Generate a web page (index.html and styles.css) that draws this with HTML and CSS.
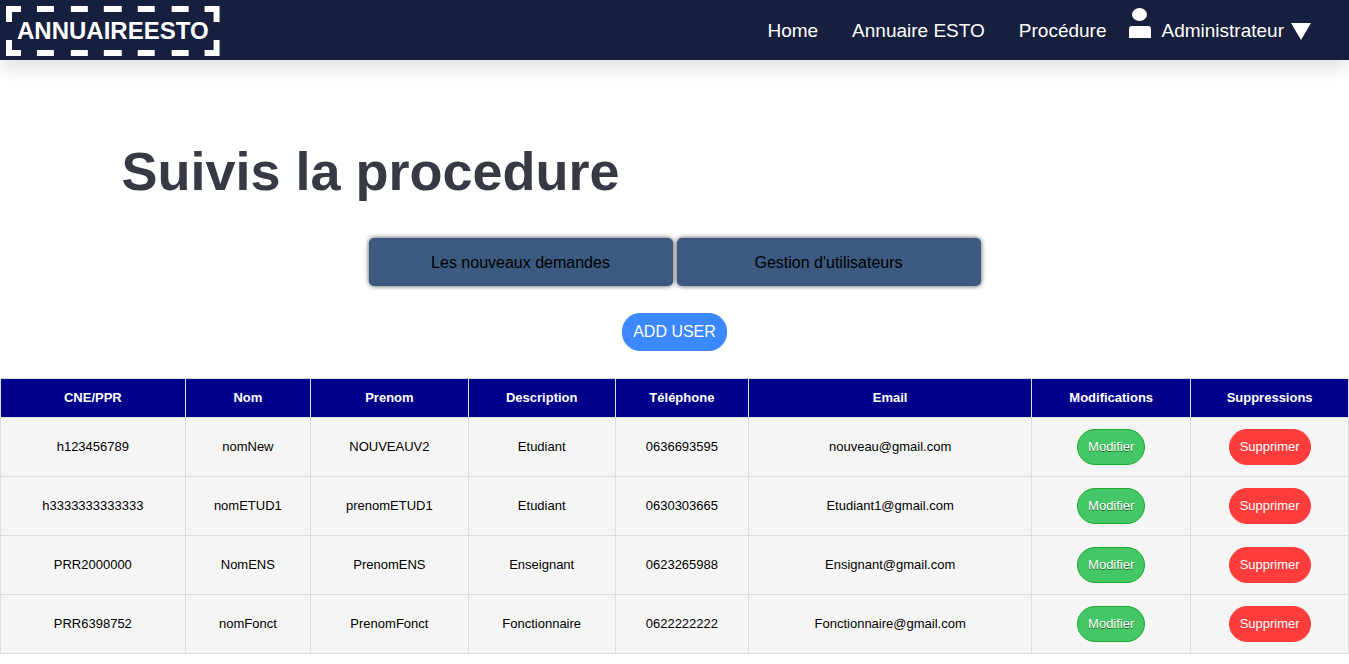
FILE: index.html
```html
<!DOCTYPE html>
<html lang="fr">
<head>
<meta charset="utf-8">
<meta name="viewport" content="width=device-width, initial-scale=1">
<title>Annuaire ESTO</title>
<link rel="stylesheet" href="styles.css">
</head>
<body>
<header class="topbar">
  <a class="logo" href="#">
    <svg class="logo-frame" viewBox="0 0 214 50" preserveAspectRatio="none" aria-hidden="true">
      <path d="M0 16V0H15V6H6V16ZM199 0H214V16H208V6H199ZM0 34V50H15V44H6V34ZM199 50H214V34H208V44H199Z"/>
      <path d="M31 0h17v6h-17zM65 0h17v6h-17zM98 0h18v6h-18zM132 0h17v6h-17zM166 0h17v6h-17z"/>
      <path d="M31 44h17v6h-17zM65 44h17v6h-17zM98 44h18v6h-18zM132 44h17v6h-17zM166 44h17v6h-17z"/>
    </svg>
    ANNUAIREESTO
  </a>
  <nav class="menu">
    <a class="menu-link" href="#">Home</a>
    <a class="menu-link" href="#">Annuaire ESTO</a>
    <a class="menu-link" href="#">Procédure</a>
    <a class="menu-user" href="#">
      <svg class="user-icon" viewBox="0 0 22 30" aria-hidden="true"><ellipse cx="10.500" cy="6.500" rx="7.500" ry="6.500"/><path d="M0 30V21Q0 18 3 18H19Q22 18 22 21V30Z"/></svg>
      Administrateur
      <svg class="caret" viewBox="0 0 20 17" aria-hidden="true"><path d="M0 0H20L10 17Z"/></svg>
    </a>
  </nav>
</header>
<main>
  <h1 class="title">Suivis la procedure</h1>
  <div class="tabs">
    <button class="tab" type="button">Les nouveaux demandes</button>
    <button class="tab" type="button">Gestion d'utilisateurs</button>
  </div>
  <div class="actions"><button class="pill add" type="button">ADD USER</button></div>
  <table class="users">
    <colgroup><col class="c-id"><col class="c-nom"><col class="c-prenom"><col class="c-desc"><col class="c-tel"><col class="c-mail"><col class="c-mod"><col class="c-sup"></colgroup>
    <thead>
      <tr><th>CNE/PPR</th><th>Nom</th><th>Prenom</th><th>Description</th><th>Téléphone</th><th>Email</th><th>Modifications</th><th>Suppressions</th></tr>
    </thead>
    <tbody>
      <tr><td>h123456789</td><td>nomNew</td><td>NOUVEAUV2</td><td>Etudiant</td><td>0636693595</td><td>nouveau@gmail.com</td><td><button class="pill edit" type="button">Modifier</button></td><td><button class="pill delete" type="button">Supprimer</button></td></tr>
      <tr><td>h3333333333333</td><td>nomETUD1</td><td>prenomETUD1</td><td>Etudiant</td><td>0630303665</td><td>Etudiant1@gmail.com</td><td><button class="pill edit" type="button">Modifier</button></td><td><button class="pill delete" type="button">Supprimer</button></td></tr>
      <tr><td>PRR2000000</td><td>NomENS</td><td>PrenomENS</td><td>Enseignant</td><td>0623265988</td><td>Ensignant@gmail.com</td><td><button class="pill edit" type="button">Modifier</button></td><td><button class="pill delete" type="button">Supprimer</button></td></tr>
      <tr><td>PRR6398752</td><td>nomFonct</td><td>PrenomFonct</td><td>Fonctionnaire</td><td>0622222222</td><td>Fonctionnaire@gmail.com</td><td><button class="pill edit" type="button">Modifier</button></td><td><button class="pill delete" type="button">Supprimer</button></td></tr>
    </tbody>
  </table>
</main>
</body>
</html>
```
FILE: styles.css
```css
* { box-sizing: border-box; }
body {
  margin: 0;
  background: #fff;
  color: #000;
  font-family: "Liberation Sans", Arial, sans-serif;
}
button { font-family: inherit; cursor: pointer; }

.topbar {
  display: flex;
  align-items: center;
  justify-content: space-between;
  padding: 6px 38px 4px 6px;
  background: #161f3d;
  box-shadow: 0 10px 15px rgba(0, 0, 0, 0.1);
}
.logo {
  position: relative;
  padding: 11px;
  color: #fff;
  font-size: 24px;
  font-weight: bold;
  line-height: 28px;
  text-decoration: none;
}
.logo-frame {
  position: absolute;
  inset: 0;
  width: 100%;
  height: 100%;
  fill: #fff;
}
.menu { display: flex; align-items: center; }
.menu-link, .menu-user {
  color: #fff;
  font-size: 19px;
  line-height: 22px;
  text-decoration: none;
}
.menu-link { margin-right: 34px; }
.menu-link:nth-child(3) { margin-right: 22px; }
.menu-user { display: flex; align-items: center; }
.user-icon {
  width: 22px;
  height: 30px;
  margin: 0 11px 16px 0;
  fill: #fff;
}
.caret {
  width: 20px;
  height: 17px;
  margin-left: 7px;
  fill: #fff;
}

.title {
  margin: 80px 9% 36px;
  color: #373943;
  font-size: 54px;
  line-height: 62px;
}
.tabs {
  display: flex;
  justify-content: center;
  gap: 4px;
}
.tab {
  width: 304px;
  padding: 15px 14px 13px;
  border: 0;
  border-radius: 5px;
  background: #3c5a80;
  box-shadow: 0 0 5px rgba(0, 0, 0, 0.7);
  color: #000;
  font-size: 16px;
  line-height: 20px;
}
.actions {
  display: flex;
  justify-content: center;
  padding: 27px 0;
}
.pill {
  padding: 9px 10px;
  border: 1px solid;
  border-radius: 18px;
  color: #fff;
  font-size: 13px;
  line-height: 16px;
}
.add {
  border-color: #3b88ff;
  background: #3b88ff;
  font-size: 16px;
  line-height: 18px;
}
.edit {
  border-color: #18ab29;
  background: #44c767;
  text-shadow: 0 1px 0 #2f6627;
}
.delete {
  border-color: #ff3c3c;
  background: #ff3c3c;
}

.users {
  width: 100%;
  border-collapse: collapse;
  table-layout: fixed;
  background: #f5f5f5;
  font-size: 13px;
  line-height: 16px;
  text-align: center;
}
.users th, .users td { border: 1px solid #ddd; }
.users th {
  padding: 11px 0;
  background: #00008b;
  color: #fff;
}
.users td { padding: 11px 0; }
.c-id { width: 13.7%; }
.c-nom { width: 9.3%; }
.c-prenom { width: 11.7%; }
.c-desc { width: 10.9%; }
.c-tel { width: 9.9%; }
.c-mail { width: 21%; }
.c-mod { width: 11.8%; }
.c-sup { width: 11.7%; }
```
